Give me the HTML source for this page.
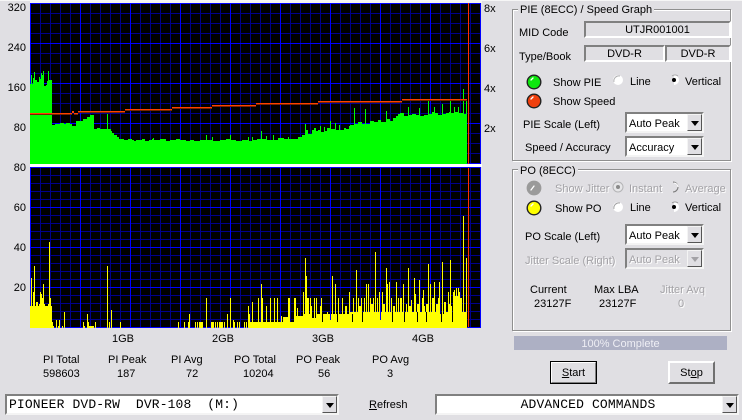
<!DOCTYPE html>
<html><head><meta charset="utf-8"><title>PIE / PO Scan</title>
<style>
html,body{margin:0;padding:0;background:#e0dfe3}
body{width:742px;height:420px;position:relative;overflow:hidden;font:11px/14px "Liberation Sans",Arial,sans-serif;color:#000}
.t{position:absolute;white-space:pre;height:14px;line-height:14px;margin-top:1px}
.r{text-align:right}.c{text-align:center}
.d{color:#a3a2a6;text-shadow:1px 1px 0 #fff}
.group{position:absolute;border:1px solid #8f8f8f;box-shadow:1px 1px 0 #fff,inset 1px 1px 0 #fff;box-sizing:border-box}
.leg{position:absolute;background:#e0dfe3;padding:0 2px;height:14px;line-height:14px;white-space:pre;margin-top:1px}
.field{position:absolute;box-sizing:border-box;border-top:2px solid #808080;border-left:2px solid #808080;border-bottom:2px solid #fff;border-right:2px solid #fff;text-align:center;line-height:15px;background:#e0dfe3}
.combo{position:absolute;box-sizing:border-box;background:#fff;border-top:2px solid #808080;border-left:2px solid #808080;border-bottom:2px solid #f4f4f4;border-right:2px solid #f4f4f4;line-height:20px;padding-left:2px;white-space:pre}
.combo.off{background:#e0dfe3;color:#a3a2a6;text-shadow:1px 1px 0 #fff}
.combo i{position:absolute;right:0;top:0;width:15px;height:17px;box-sizing:border-box;background:#e0dfe3;border:1px solid;border-color:#f4f4f4 #555 #555 #f4f4f4}
.combo i:after{content:"";position:absolute;left:3px;top:6px;border:4px solid transparent;border-top:5px solid #000;border-bottom:0}
.combo.off i:after{border-top-color:#a3a2a6}
.mono{font:13px/17px "Liberation Mono","Courier New",monospace;letter-spacing:.13px}
.btn{position:absolute;box-sizing:border-box;width:47px;height:23px;background:#e0dfe3;border:2px solid;border-color:#fff #707070 #707070 #fff;text-align:center;line-height:20px}
.btn.def{outline:1px solid #000;outline-offset:-1px;border-color:#fff #808080 #808080 #fff}
u{text-decoration:underline}
svg{position:absolute;left:0;top:0}
</style></head><body>
<svg width="742" height="420" viewBox="0 0 742 420" shape-rendering="crispEdges">
<defs>
<pattern id="a1" patternUnits="userSpaceOnUse" x="30" y="3" width="10" height="10"><rect width="10" height="10" fill="#000"/><rect width="1" height="10" fill="#00008c"/><rect width="10" height="1" fill="#00008c"/></pattern>
<pattern id="a2" patternUnits="userSpaceOnUse" x="30" y="3" width="50" height="40"><rect width="1" height="40" fill="#0000ff"/><rect width="50" height="1" fill="#0000ff"/></pattern>
<pattern id="b1" patternUnits="userSpaceOnUse" x="30" y="167" width="10" height="8"><rect width="10" height="8" fill="#000"/><rect width="1" height="8" fill="#00008c"/><rect width="10" height="1" fill="#00008c"/></pattern>
<pattern id="b2" patternUnits="userSpaceOnUse" x="30" y="167" width="50" height="40"><rect width="1" height="40" fill="#0000ff"/><rect width="50" height="1" fill="#0000ff"/></pattern>
</defs>
<rect x="0" y="0" width="742" height="1" fill="#f6f6f6"/>
<rect x="30" y="1" width="452" height="2" fill="#f2f2f2"/>
<rect x="30" y="3" width="451" height="161" fill="url(#a1)"/>
<rect x="30" y="3" width="451" height="161" fill="url(#a2)"/>
<rect x="30" y="167" width="451" height="161" fill="url(#b1)"/>
<rect x="30" y="167" width="451" height="161" fill="url(#b2)"/>
<rect x="30" y="327" width="451" height="1" fill="#0000ff"/>
<rect x="30" y="164" width="452" height="3" fill="#fff"/>

<path fill="#00ff00" d="M30 164V84H31V75H32V84H33V78H34V72H35V80H37V82H39V77H40V79H41V73H42V75H43V71H44V86H45V86H46V85H47V81H48V71H49V80H52V125H55V124H60V123H64V124H66V123H70V124H72V126H76V121H83V119H87V117H90V115H94V129H97V128H100V129H107V114H108V129H111V131H112V133H114V135H117V137H119V139H124V140H128V139H132V140H134V141H136V140H142V139H145V141H149V140H152V139H153V138H154V140H160V139H166V141H170V140H176V139H180V140H186V141H190V140H194V141H200V140H206V135H207V140H212V137H213V141H220V140H226V139H230V135H231V140H236V141H242V140H248V137H249V141H252V137H253V140H257V139H261V131H262V139H266V136H267V140H273V135H274V140H278V138H284V139H288V137H289V139H298V137H302V135H305V124H306V130H308V134H312V130H314V128H316V131H318V130H320V126H321V132H324V127H325V131H327V128H330V121H331V129H335V123H336V130H339V125H340V130H344V128H346V129H349V126H350V125H354V108H355V124H358V122H362V124H365V109H366V124H370V121H374V122H378V120H381V122H386V111H387V119H390V121H393V118H396V116H398V114H400V113H404V116H408V107H409V115H412V114H416V115H419V108H420V116H424V115H428V101H429V114H432V112H434V107H435V113H438V115H442V104H443V114H446V113H449V112H450V99H451V113H454V107H455V112H458V107H459V113H463V89H464V114H466V100H467V164Z"/>

<g fill="#7a2400">
<rect x="30" y="114" width="42" height="1"/><rect x="74" y="114" width="4" height="1"/><rect x="78" y="112" width="47" height="1"/>
<rect x="125" y="110" width="47" height="1"/><rect x="172" y="108" width="40" height="1"/><rect x="212" y="106" width="44" height="1"/>
<rect x="256" y="104" width="62" height="1"/><rect x="318" y="102" width="84" height="1"/><rect x="402" y="100" width="65" height="1"/>
</g>
<g fill="#ff4000">
<rect x="30" y="113" width="42" height="1"/><rect x="72" y="111" width="2" height="2"/><rect x="74" y="113" width="4" height="1"/><rect x="78" y="111" width="47" height="1"/>
<rect x="125" y="109" width="47" height="1"/><rect x="172" y="107" width="40" height="1"/><rect x="212" y="105" width="44" height="1"/>
<rect x="256" y="103" width="62" height="1"/><rect x="318" y="101" width="84" height="1"/><rect x="402" y="99" width="65" height="1"/>
</g>
<rect x="468" y="3" width="1" height="161" fill="#ff3000"/>
<rect x="468" y="168" width="1" height="159" fill="#ff3000"/>

<path fill="#ffff00" d="M30 328V306H52V322H53V328ZM250 328V322H283V317H290V322H296V316H304V314H310V318H316V314H350V312H440V314H446V312H467V328Z"/>
<path stroke="#ffff00" stroke-width="1" fill="none" d="M31.5 328V278M33.5 328V292M34.5 328V266M36.5 328V302M37.5 328V302M39.5 328V304M40.5 328V292M41.5 328V294M42.5 328V298M43.5 328V284M44.5 328V304M48.5 328V304M49.5 328V242M50.5 328V298M53.5 328V326M56.5 328V320M58.5 328V326M59.5 328V320M62.5 328V326M64.5 328V312M83.5 328V322M84.5 328V326M87.5 328V314M88.5 328V322M89.5 328V326M90.5 328V326M91.5 328V326M92.5 328V326M93.5 328V326M95.5 328V322M107.5 328V266M109.5 328V322M111.5 328V310M120.5 328V322M178.5 328V322M184.5 328V322M188.5 328V322M189.5 328V314M195.5 328V322M197.5 328V322M199.5 328V322M200.5 328V322M201.5 328V322M202.5 328V322M206.5 328V298M211.5 328V322M212.5 328V322M213.5 328V322M215.5 328V322M217.5 328V322M219.5 328V322M220.5 328V322M221.5 328V322M222.5 328V322M224.5 328V322M227.5 328V314M230.5 328V298M233.5 328V320M234.5 328V322M237.5 328V322M239.5 328V322M244.5 328V322M246.5 328V322M248.5 328V306M249.5 328V314M252.5 328V302M258.5 328V298M261.5 328V284M262.5 328V298M266.5 328V306M270.5 328V298M274.5 328V298M277.5 328V298M281.5 328V316M288.5 328V298M289.5 328V298M294.5 328V298M295.5 328V298M297.5 328V308M303.5 328V292M305.5 328V258M306.5 328V276M307.5 328V298M308.5 328V298M310.5 328V298M314.5 328V298M316.5 328V298M320.5 328V306M321.5 328V298M327.5 328V312M332.5 328V276M335.5 328V284M338.5 328V298M342.5 328V298M349.5 328V292M353.5 328V298M356.5 328V270M358.5 328V298M361.5 328V298M364.5 328V298M366.5 328V284M368.5 328V284M370.5 328V298M373.5 328V298M375.5 328V252M377.5 328V298M379.5 328V292M382.5 328V292M386.5 328V268M387.5 328V284M389.5 328V282M391.5 328V298M396.5 328V282M398.5 328V298M400.5 328V298M401.5 328V298M403.5 328V284M406.5 328V304M408.5 328V268M411.5 328V300M414.5 328V278M415.5 328V294M419.5 328V280M422.5 328V298M423.5 328V290M424.5 328V306M428.5 328V264M430.5 328V284M432.5 328V298M433.5 328V298M434.5 328V282M438.5 328V298M439.5 328V282M442.5 328V262M448.5 328V292M450.5 328V260M451.5 328V306M453.5 328V292M454.5 328V290M456.5 328V288M458.5 328V288M459.5 328V292M461.5 328V298M463.5 328V216M466.5 328V258"/>
<path stroke="#ffff00" stroke-width="2" fill="none" d="M311 328V306M346 328V306M360 328V306M372 328V304M384 328V304M394 328V306M410 328V306M418 328V304M427 328V304M437 328V304M445 328V302M449 328V304M455 328V296M457 328V296M460 328V298"/>
<path stroke="#000" stroke-width="1" fill="none" d="M255.5 322V318M263.5 322V320M322.5 322V314M337.5 322V314M352.5 322V314M362.5 322V312M392.5 322V312M404.5 322V312M417.5 322V312M426.5 322V312M441.5 322V312M452.5 322V312"/>
<path stroke="#0000ff" stroke-width="1" fill="none" d="M280.5 322V318M330.5 320V312M380.5 320V312"/>

<g shape-rendering="auto">
<g stroke="#222" stroke-width="1.4">
<circle cx="534" cy="82" r="6.8" fill="#0ee60e"/>
<circle cx="534" cy="101" r="6.8" fill="#f0400e"/>
<circle cx="534" cy="208" r="6.8" fill="#ffff00"/>
</g>
<circle cx="534" cy="188" r="7.4" fill="#9a9a9a"/>
<g stroke="#fff" stroke-width="1.3" stroke-linecap="round">
<path d="M531 80L533 78M531 99L533 97M531 206L533 204M531 190L534 186" stroke="#fff"/>
</g>
<g>
<circle cx="618" cy="80" r="5" fill="#fff"/><path d="M614 82A5 5 0 0 1 620 76" fill="none" stroke="#b0b0b2"/>
<circle cx="618" cy="207" r="5" fill="#fff"/><path d="M614 209A5 5 0 0 1 620 203" fill="none" stroke="#a0a0a2"/>
<path d="M674 75A5 5 0 0 1 674 85Z" fill="#fff"/><circle cx="674" cy="80" r="2" fill="#000"/>
<path d="M672 76A5 5 0 0 1 678 76" fill="none" stroke="#a8a8aa"/>
<path d="M674 202A5 5 0 0 1 674 212Z" fill="#fff"/><circle cx="674" cy="207" r="2" fill="#000"/>
<path d="M672 203A5 5 0 0 1 678 203" fill="none" stroke="#999"/>
<circle cx="618" cy="187" r="5" fill="#e6e6e8" stroke="#b4b4b6"/><circle cx="618" cy="187" r="2" fill="#8a8a8a"/>
<path d="M673 182A5 5 0 0 1 673 192" fill="none" stroke="#777" stroke-width="1"/><path d="M674 183A4 4 0 0 1 678 187" fill="none" stroke="#fff"/>
</g>
</g>
</svg>

<span class="t r" style="right:716px;top:0">320</span>
<span class="t r" style="right:716px;top:40px">240</span>
<span class="t r" style="right:716px;top:80px">160</span>
<span class="t r" style="right:716px;top:120px">80</span>
<span class="t r" style="right:716px;top:160px">80</span>
<span class="t r" style="right:716px;top:200px">60</span>
<span class="t r" style="right:716px;top:240px">40</span>
<span class="t r" style="right:716px;top:280px">20</span>
<span class="t" style="left:484px;top:1px">8x</span>
<span class="t" style="left:484px;top:41px">6x</span>
<span class="t" style="left:484px;top:81px">4x</span>
<span class="t" style="left:484px;top:121px">2x</span>
<span class="t" style="left:112px;top:331px">1GB</span>
<span class="t" style="left:212px;top:331px">2GB</span>
<span class="t" style="left:312px;top:331px">3GB</span>
<span class="t" style="left:412px;top:331px">4GB</span>

<span class="t" style="left:43px;top:352px">PI Total</span><span class="t" style="left:43px;top:366px">598603</span>
<span class="t" style="left:108px;top:352px">PI Peak</span><span class="t" style="left:117px;top:366px">187</span>
<span class="t" style="left:171px;top:352px">PI Avg</span><span class="t" style="left:186px;top:366px">72</span>
<span class="t" style="left:234px;top:352px">PO Total</span><span class="t" style="left:243px;top:366px">10204</span>
<span class="t" style="left:296px;top:352px">PO Peak</span><span class="t" style="left:318px;top:366px">56</span>
<span class="t" style="left:372px;top:352px">PO Avg</span><span class="t" style="left:387px;top:366px">3</span>

<div class="group" style="left:512px;top:9px;width:219px;height:152px"></div>
<span class="leg" style="left:518px;top:2px">PIE (8ECC) / Speed Graph</span>
<span class="t" style="left:519px;top:25px">MID Code</span>
<div class="field" style="left:584px;top:21px;width:147px;height:17px">UTJR001001</div>
<span class="t" style="left:519px;top:49px">Type/Book</span>
<div class="field" style="left:584px;top:45px;width:81px;height:17px">DVD-R</div>
<div class="field" style="left:665px;top:45px;width:66px;height:17px">DVD-R</div>
<span class="t" style="left:553px;top:75px">Show PIE</span>
<span class="t" style="left:553px;top:94px">Show Speed</span>
<span class="t" style="left:630px;top:74px">Line</span>
<span class="t" style="left:685px;top:74px">Vertical</span>
<span class="t" style="left:523px;top:117px">PIE Scale (Left)</span>
<span class="t" style="left:525px;top:140px">Speed / Accuracy</span>
<div class="combo" style="left:625px;top:112px;width:79px;height:21px">Auto Peak<i></i></div>
<div class="combo" style="left:625px;top:136px;width:79px;height:21px">Accuracy<i></i></div>

<div class="group" style="left:512px;top:169px;width:219px;height:162px"></div>
<span class="leg" style="left:518px;top:163px">PO (8ECC)</span>
<span class="t d" style="left:555px;top:181px">Show Jitter</span>
<span class="t d" style="left:629px;top:181px">Instant</span>
<span class="t d" style="left:685px;top:181px">Average</span>
<span class="t" style="left:555px;top:201px">Show PO</span>
<span class="t" style="left:630px;top:200px">Line</span>
<span class="t" style="left:685px;top:200px">Vertical</span>
<span class="t" style="left:525px;top:229px">PO Scale (Left)</span>
<span class="t d" style="left:525px;top:253px">Jitter Scale (Right)</span>
<div class="combo" style="left:625px;top:224px;width:79px;height:21px">Auto Peak<i></i></div>
<div class="combo off" style="left:625px;top:248px;width:79px;height:21px">Auto Peak<i></i></div>
<span class="t" style="left:530px;top:282px">Current</span><span class="t" style="left:534px;top:296px">23127F</span>
<span class="t" style="left:594px;top:282px">Max LBA</span><span class="t" style="left:599px;top:296px">23127F</span>
<span class="t d" style="left:660px;top:282px">Jitter Avq</span><span class="t d" style="left:678px;top:296px">0</span>

<div style="position:absolute;left:514px;top:336px;width:213px;height:14px;background:#adb0c4;color:#eeeef4;text-align:center;line-height:16px">100% Complete</div>
<div class="btn def" style="left:550px;top:361px"><u>S</u>tart</div>
<div class="btn" style="left:668px;top:361px">St<u>o</u>p</div>

<div class="combo mono" style="left:5px;top:394px;width:334px;height:21px">PIONEER DVD-RW  DVR-108  (M:)<i></i></div>
<span class="t" style="left:369px;top:397px"><u>R</u>efresh</span>
<div class="combo mono c" style="left:435px;top:394px;width:304px;height:21px;padding-right:0">ADVANCED COMMANDS<i></i></div>
</body></html>
